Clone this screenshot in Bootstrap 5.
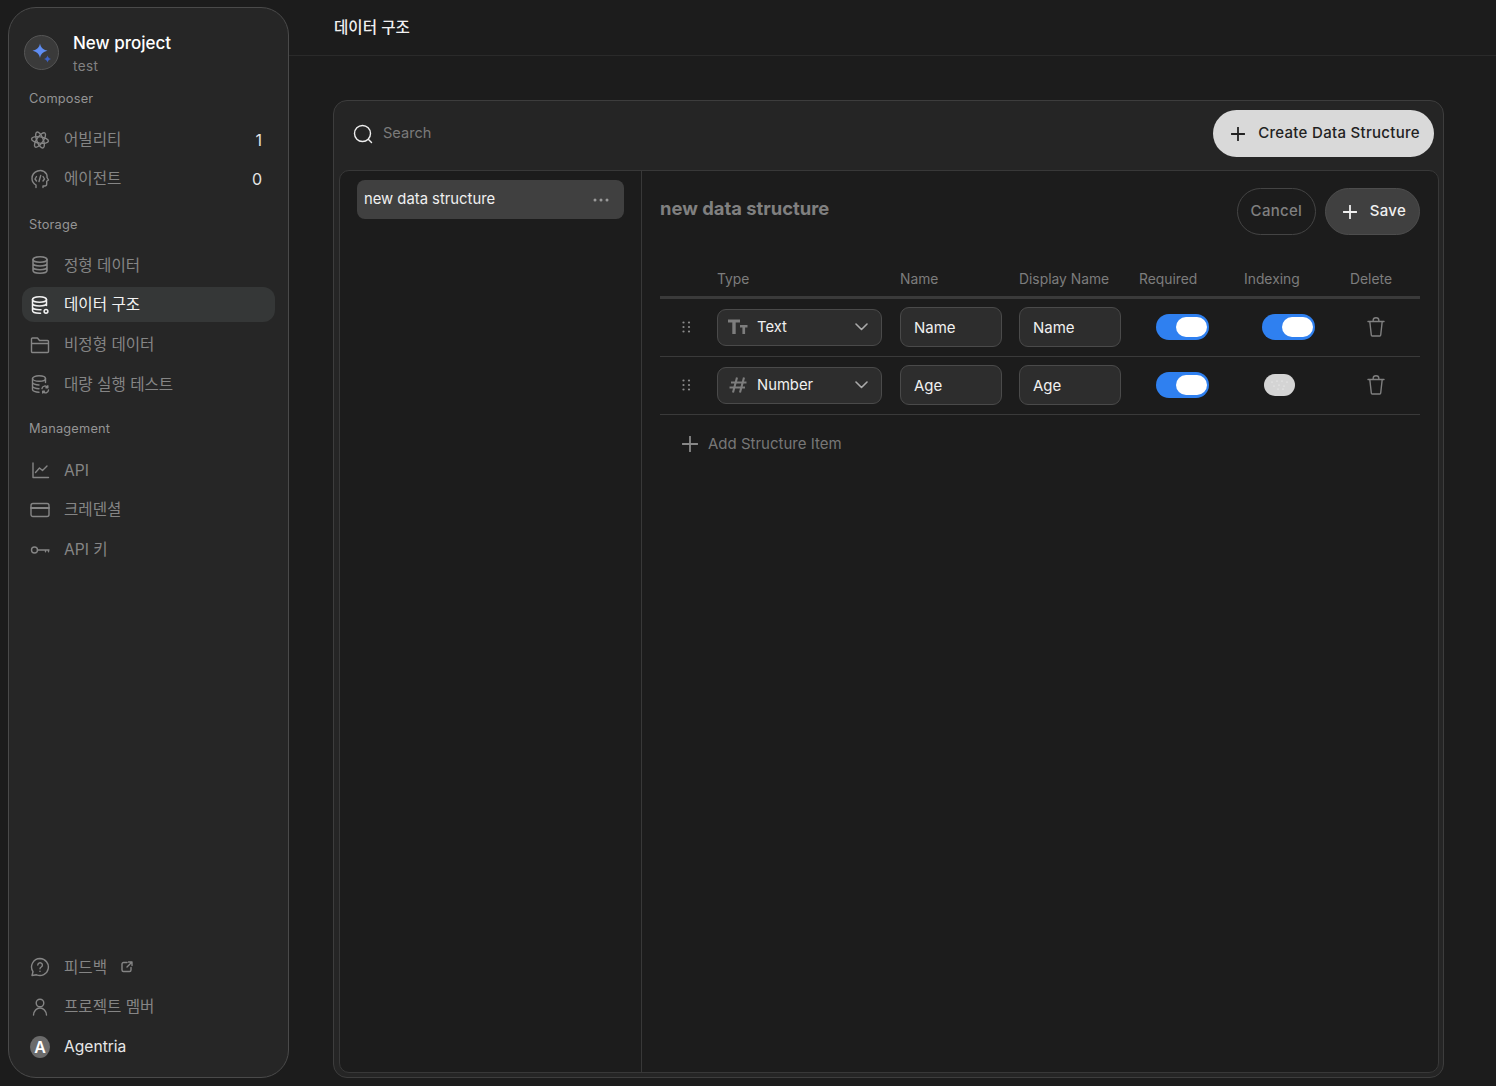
<!DOCTYPE html>
<html lang="ko"><head><meta charset="utf-8"><title>데이터 구조</title>
<link rel="stylesheet" href="https://cdn.jsdelivr.net/npm/bootstrap@5.3.0/dist/css/bootstrap.min.css">
<style>
html,body{height:100%;overflow:hidden}
body{background:#1c1c1c;font-family:Inter,"Noto Sans CJK KR",sans-serif;color:#fff;font-size:15px}
svg{display:block;flex:none;fill:none;stroke:currentColor;stroke-width:1.4;stroke-linecap:round;stroke-linejoin:round}
.app-shell{height:1086px}
.side-panel{width:281px;height:1071px;margin:7px 0 8px 8px;background:#262626;border:1px solid #4a4a4a;border-radius:28px;padding:27px 13px 13px 13px;flex:none}
.brand-disc{width:35px;height:35px;border-radius:50%;background:#3a3a3a;border:1px solid #555;margin-left:2px}
.brand-text{margin-left:14px;margin-top:-2px}
.brand-name{font-size:17px;line-height:20px;font-weight:500;color:#fff}
.brand-sub{font-size:13.5px;line-height:18px;color:#828282;margin-top:4px;letter-spacing:.4px}
.side-label{height:20px;line-height:20px;font-size:12.8px;color:#949494;margin:13.5px 0 13px 7px;letter-spacing:.2px}
.side-label.first-label{margin-top:14px;margin-bottom:13px}
.side-label.mid-label{margin-top:13px;margin-bottom:13.5px}
.side-link{height:35px;margin-bottom:4.65px;border-radius:12px;padding:0 13px 0 8px;display:flex;align-items:center;color:#858585;font-size:15.6px}
.side-link .ico-box{width:20px;margin-right:14px;display:flex;justify-content:center}
.side-link .side-count{margin-left:auto;color:#e4e4e4;font-size:16px}
.side-link.is-active{background:#353737;color:#f2f2f2}
.side-link.is-user{color:#e8e8e8}
.user-dot{width:22px;height:22px;border-radius:50%;background:#6b6b6b;color:#fff;font-size:16px;font-weight:600;display:flex;align-items:center;justify-content:center}
.ext-mark{margin-left:14px}
.top-strip{height:56px;border-bottom:1px solid #2a2a2a;padding:1px 0 0 45px;font-size:15.6px;color:#f0f0f0;font-weight:500}
.work-area{padding:44px 52px 8px 44px}
.outer-box{background:#252525;border:1px solid #3d3d3d;border-radius:14px;padding:0 4px 4px 5px}
.search-bar{height:69px;padding:0 5px 4px 14px;flex:none}
.search-word{font-size:14.6px;color:#7a7a7a;margin-left:10px}
.pill{height:47px;border-radius:24px;font-size:15px;font-weight:500;letter-spacing:.3px;display:inline-flex;align-items:center;padding:0 13px 0 17px;gap:13px;border:1px solid transparent;background:none}
.pill-light{background:#d9d9d9;color:#222}
.inner-box{background:#1c1c1c;border:1px solid #383838;border-radius:10px;min-height:0}
.list-pane{width:302px;border-right:1px solid #383838;padding:9px 17px;flex:none}
.list-row{height:39px;background:#404040;border-radius:8px;padding:0 15px 0 7px;color:#f0f0f0;font-size:14.8px}
.detail-pane{padding:17px 19px 0 18px}
.detail-title{font-size:18.4px;font-weight:700;color:#808080;line-height:40px;height:42px}
.btn-pair{gap:9px}
.pill-ghost{border-color:#444;color:#808080;padding:0 12.500px}
.pill-dark{background:#404040;border-color:#4d4d4d;color:#f0f0f0;padding-right:13px}
.grid-row{display:grid;grid-template-columns:57px 183px 119px 120px 105px 106px 70px;align-items:center}
.grid-head{margin-top:-25px;height:89px;padding-top:59px;align-items:start;border-bottom:3px solid #3a3a3a;font-size:13.85px;color:#7d7d7d}
.grid-head span{line-height:20px}
.grid-body{height:58px;border-bottom:1px solid #3a3a3a;padding-bottom:1px}
.dots{margin-left:22px;color:#8a8a8a}
.type-box{width:165px;height:37px;background:#2d2d2d;border:1px solid #4a4a4a;border-radius:9px;padding:0 13px 0 10px;font-size:14.8px;color:#f0f0f0}
.type-box .type-word{margin-left:9px}
.field-box{width:102px;height:40px;background:#2d2d2d;border:1px solid #4a4a4a;border-radius:9px;color:#f0f0f0;font-size:15px;padding:0 13px;box-shadow:none}
.field-box:focus{background:#2d2d2d;color:#f0f0f0;border-color:#4a4a4a;box-shadow:none}
.toggle-on{width:53px;height:26px;border-radius:13px;background:#2f80f0;margin-left:17px;padding:3px 2px;justify-content:flex-end}
.toggle-on.second-col{margin-left:18px}
.toggle-on i{display:block;width:31px;height:20px;border-radius:10px;background:#fff}
.toggle-off{width:31px;height:22px;border-radius:11px;margin-left:20px;background:#d4d4d4;color:#fff}
.trash-wrap{margin-left:17px;color:#808080}
.add-line{height:58px;padding-left:22px;color:#777;font-size:15px}
.add-line span{margin-left:10px}
</style></head><body>
<div class="app-shell d-flex">
<aside class="side-panel d-flex flex-column">
 <div class="d-flex align-items-start">
  <div class="brand-disc d-flex align-items-center justify-content-center">
   <svg width="26" height="26" viewBox="0 0 26 26" style="stroke:none"><path d="M11 3.500 C11.800 7.500 14 9.500 18.500 10.800 C14 12 11.800 14 11 18 C10.200 14 8 12 3.500 10.800 C8 9.500 10.200 7.500 11 3.500Z" fill="#5f8df2"/><path d="M18.500 15.500 C19 17.500 20 18.500 22 19 C20 19.500 19 20.500 18.500 22.500 C18 20.500 17 19.500 15 19 C17 18.500 18 17.500 18.500 15.500Z" fill="#3d62c4"/></svg>
  </div>
  <div class="brand-text"><div class="brand-name">New project</div><div class="brand-sub">test</div></div>
 </div>
 <div class="side-label first-label">Composer</div>
 <div class="side-link"><span class="ico-box"><svg width="20" height="20" viewBox="0 0 20 20"><ellipse cx="10" cy="10" rx="8.500" ry="3.200" transform="rotate(8 10 10)"/><ellipse cx="10" cy="10" rx="8.500" ry="3.200" transform="rotate(68 10 10)"/><ellipse cx="10" cy="10" rx="8.500" ry="3.200" transform="rotate(-55 10 10)"/></svg></span>어빌리티<span class="side-count">1</span></div>
 <div class="side-link"><span class="ico-box"><svg width="20" height="20" viewBox="0 0 20 20"><path d="M6 18.500V16C3.500 14.500 2 12 2 9.500a8 8 0 0 1 14.500-4.500c.5 1 .6 2.500.5 3.500l1.500 2.500-1.800 1.300V15a2 2 0 0 1-2 2H13v1.500"/><path d="M6.500 7.500 5 10l1.500 2M13 7.500l1.500 2.500-1.500 2M10.700 6.500 9 12.500"/></svg></span>에이전트<span class="side-count">0</span></div>
 <div class="side-label">Storage</div>
 <div class="side-link"><span class="ico-box"><svg width="20" height="20" viewBox="0 0 20 20" style="stroke-width:1.500"><ellipse cx="10" cy="4.500" rx="7" ry="2.800"/><path d="M3 4.500v11c0 1.500 3 2.800 7 2.800s7-1.300 7-2.800v-11M3 8.200c0 1.500 3 2.800 7 2.800s7-1.300 7-2.800M3 12c0 1.500 3 2.800 7 2.800s7-1.300 7-2.800"/></svg></span>정형 데이터</div>
 <div class="side-link is-active"><span class="ico-box"><svg width="20" height="20" viewBox="0 0 20 20" style="stroke-width:1.500"><ellipse cx="9.500" cy="4.500" rx="7" ry="2.800"/><path d="M2.500 4.500v11c0 1.500 3 2.800 7 2.800h1M16.500 4.500v6M2.500 8.200c0 1.500 3 2.800 7 2.800s7-1.300 7-2.800M2.500 12c0 1.500 3 2.800 7 2.800h1.500"/><circle cx="16" cy="16.300" r="1.900"/></svg></span>데이터 구조</div>
 <div class="side-link"><span class="ico-box"><svg width="20" height="20" viewBox="0 0 20 20"><path d="M1.500 16.500V4a1 1 0 0 1 1-1h5l2 2.500h8a1 1 0 0 1 1 1v10a1 1 0 0 1-1 1h-15a1 1 0 0 1-1-1ZM1.500 8.500h17"/></svg></span>비정형 데이터</div>
 <div class="side-link"><span class="ico-box"><svg width="20" height="20" viewBox="0 0 20 20"><ellipse cx="9" cy="4.500" rx="6.500" ry="2.800"/><path d="M2.500 4.500v11c0 1.500 3 2.800 6.500 2.800M15.500 4.500v4M2.500 8.200c0 1.500 3 2.800 6.500 2.800M2.500 12c0 1.500 3 2.800 6.500 2.800"/><path d="M12 14.500a3 3 0 0 1 5.500-1M18.500 16a3 3 0 0 1-5.500 1.500M17.800 11.800v1.900h-1.900M12.700 19v-1.800h1.800"/></svg></span>대량 실행 테스트</div>
 <div class="side-label mid-label">Management</div>
 <div class="side-link"><span class="ico-box"><svg width="20" height="20" viewBox="0 0 20 20"><path d="M3 3v14.500h15.500M5.500 12.500l4-4.500 3 2.500 4.500-4.500"/></svg></span>API</div>
 <div class="side-link"><span class="ico-box"><svg width="20" height="20" viewBox="0 0 20 20"><rect x="1" y="3.500" width="18" height="13" rx="2"/><path d="M1 8h18" stroke-width="1.800"/></svg></span>크레덴셜</div>
 <div class="side-link"><span class="ico-box"><svg width="20" height="20" viewBox="0 0 20 20"><circle cx="4.500" cy="10" r="3"/><path d="M7.500 10H19M15.500 10v1.800M18.500 10v1.800"/></svg></span>API 키</div>
 <div class="mt-auto">
  <div class="side-link"><span class="ico-box"><svg width="20" height="20" viewBox="0 0 20 20"><path d="M10 1.500a8.500 8.500 0 1 1-3.500 16.300L2 18.500l1-3.800A8.500 8.500 0 0 1 10 1.500Z"/><path d="M7.800 8a2.300 2.300 0 1 1 3.500 2c-.8.500-1.300 1-1.300 1.800M10 14.300v.1"/></svg></span>피드백<svg class="ext-mark" width="12" height="12" viewBox="0 0 12 12"><path d="M6 1.500H2.500a1.500 1.500 0 0 0-1.500 1.500v6a1.500 1.500 0 0 0 1.500 1.500h6A1.500 1.500 0 0 0 10 9V6.500M6 6l5-5M7.500 1H11v3.500"/></svg></div>
  <div class="side-link"><span class="ico-box"><svg width="20" height="20" viewBox="0 0 20 20"><circle cx="10" cy="6" r="3.800"/><path d="M3.500 18c.3-4 3-7 6.500-7s6.200 3 6.500 7"/></svg></span>프로젝트 멤버</div>
  <div class="side-link is-user mb-0"><span class="ico-box"><span class="user-dot">A</span></span>Agentria</div>
 </div>
</aside>
<main class="flex-grow-1 d-flex flex-column" style="min-width:0">
 <div class="top-strip d-flex align-items-center">데이터 구조</div>
 <div class="work-area flex-grow-1 d-flex flex-column" style="min-height:0">
  <div class="outer-box flex-grow-1 d-flex flex-column" style="min-height:0">
   <div class="search-bar d-flex align-items-center">
    <svg width="20" height="20" viewBox="0 0 20 20" style="color:#eee"><circle cx="9.500" cy="9.500" r="8"/><path d="m15.500 15.500 3 3"/></svg>
    <span class="search-word">Search</span>
    <button class="pill pill-light ms-auto" type="button"><svg width="14" height="14" viewBox="0 0 14 14" style="stroke-width:1.800"><path d="M7 .5v13M.5 7h13"/></svg>Create Data Structure</button>
   </div>
   <div class="inner-box flex-grow-1 d-flex">
    <div class="list-pane"><div class="list-row d-flex align-items-center justify-content-between"><span>new data structure</span><svg width="16" height="4" viewBox="0 0 16 4" style="stroke:none;fill:#999"><circle cx="2" cy="2" r="1.500"/><circle cx="8" cy="2" r="1.500"/><circle cx="14" cy="2" r="1.500"/></svg></div></div>
    <div class="detail-pane flex-grow-1">
     <div class="d-flex justify-content-between align-items-start">
      <div class="detail-title">new data structure</div>
      <div class="d-flex btn-pair">
       <button class="pill pill-ghost" type="button">Cancel</button>
       <button class="pill pill-dark" type="button"><svg width="14" height="14" viewBox="0 0 14 14" style="stroke-width:1.800"><path d="M7 .5v13M.5 7h13"/></svg>Save</button>
      </div>
     </div>
     <div class="grid-row grid-head"><span></span><span>Type</span><span>Name</span><span>Display Name</span><span>Required</span><span>Indexing</span><span>Delete</span></div>
     <div class="grid-row grid-body">
      <div class="dots"><svg width="9" height="12" viewBox="0 0 9 12" style="stroke:none;fill:currentColor"><circle cx="1.500" cy="1.500" r="1.100"/><circle cx="7" cy="1.500" r="1.100"/><circle cx="1.500" cy="6" r="1.100"/><circle cx="7" cy="6" r="1.100"/><circle cx="1.500" cy="10.500" r="1.100"/><circle cx="7" cy="10.500" r="1.100"/></svg></div>
      <div class="type-box d-flex align-items-center"><svg width="20" height="16" viewBox="0 0 20 16" style="stroke:none;fill:#7d7d7d"><path d="M0 .5h12v3H7.700V15H4.300V3.500H0ZM12 6h7.500v2.400h-2.400V15h-2.700V8.400H12Z"/></svg><span class="type-word">Text</span><svg class="ms-auto" width="13" height="8" viewBox="0 0 13 8" style="color:#aaa;stroke-width:1.600"><path d="m1 1 5.500 5.500L12 1"/></svg></div>
      <div><input class="form-control field-box" value="Name" aria-label="Name"></div>
      <div><input class="form-control field-box" value="Name" aria-label="Display Name"></div>
      <div><div class="toggle-on d-flex"><i></i></div></div>
      <div><div class="toggle-on second-col d-flex"><i></i></div></div>
      <div class="trash-wrap"><svg width="18" height="20" viewBox="0 0 18 20"><path d="M1 4.500h16M2.800 4.500 4.300 18a1 1 0 0 0 1 1h7.400a1 1 0 0 0 1-1l1.500-13.500M6.200 4.500V3a2.800 2.300 0 0 1 5.600 0v1.500"/></svg></div>
     </div>
     <div class="grid-row grid-body">
      <div class="dots"><svg width="9" height="12" viewBox="0 0 9 12" style="stroke:none;fill:currentColor"><circle cx="1.500" cy="1.500" r="1.100"/><circle cx="7" cy="1.500" r="1.100"/><circle cx="1.500" cy="6" r="1.100"/><circle cx="7" cy="6" r="1.100"/><circle cx="1.500" cy="10.500" r="1.100"/><circle cx="7" cy="10.500" r="1.100"/></svg></div>
      <div class="type-box d-flex align-items-center"><svg width="20" height="16" viewBox="0 0 20 16" style="color:#7d7d7d;stroke-width:2.100;stroke-linecap:butt"><path d="M9 .5 5 15.500M16 .5l-4 15M3 5.500h15.500M1.500 10.500h15.500"/></svg><span class="type-word">Number</span><svg class="ms-auto" width="13" height="8" viewBox="0 0 13 8" style="color:#aaa;stroke-width:1.600"><path d="m1 1 5.500 5.500L12 1"/></svg></div>
      <div><input class="form-control field-box" value="Age" aria-label="Name"></div>
      <div><input class="form-control field-box" value="Age" aria-label="Display Name"></div>
      <div><div class="toggle-on d-flex"><i></i></div></div>
      <div><div class="toggle-off d-flex align-items-center justify-content-center"><svg width="21" height="12" viewBox="0 0 21 12" style="stroke:none;fill:#fff"><circle cx="3" cy="3" r=".5"/><circle cx="8" cy="2" r=".5"/><circle cx="13" cy="2" r=".5"/><circle cx="18" cy="3" r=".5"/><circle cx="5" cy="7" r=".5"/><circle cx="10" cy="6" r=".5"/><circle cx="15" cy="7" r=".5"/><circle cx="9" cy="10" r=".5"/><circle cx="14" cy="10" r=".5"/></svg></div></div>
      <div class="trash-wrap"><svg width="18" height="20" viewBox="0 0 18 20"><path d="M1 4.500h16M2.800 4.500 4.300 18a1 1 0 0 0 1 1h7.400a1 1 0 0 0 1-1l1.500-13.500M6.200 4.500V3a2.800 2.300 0 0 1 5.600 0v1.500"/></svg></div>
     </div>
     <div class="add-line d-flex align-items-center"><svg width="16" height="16" viewBox="0 0 16 16" style="stroke-width:1.800;color:#888"><path d="M8 .5v15M.5 8h15"/></svg><span>Add Structure Item</span></div>
    </div>
   </div>
  </div>
 </div>
</main>
</div>
<script src="https://cdn.jsdelivr.net/npm/bootstrap@5.3.0/dist/js/bootstrap.bundle.min.js"></script>
</body></html>
